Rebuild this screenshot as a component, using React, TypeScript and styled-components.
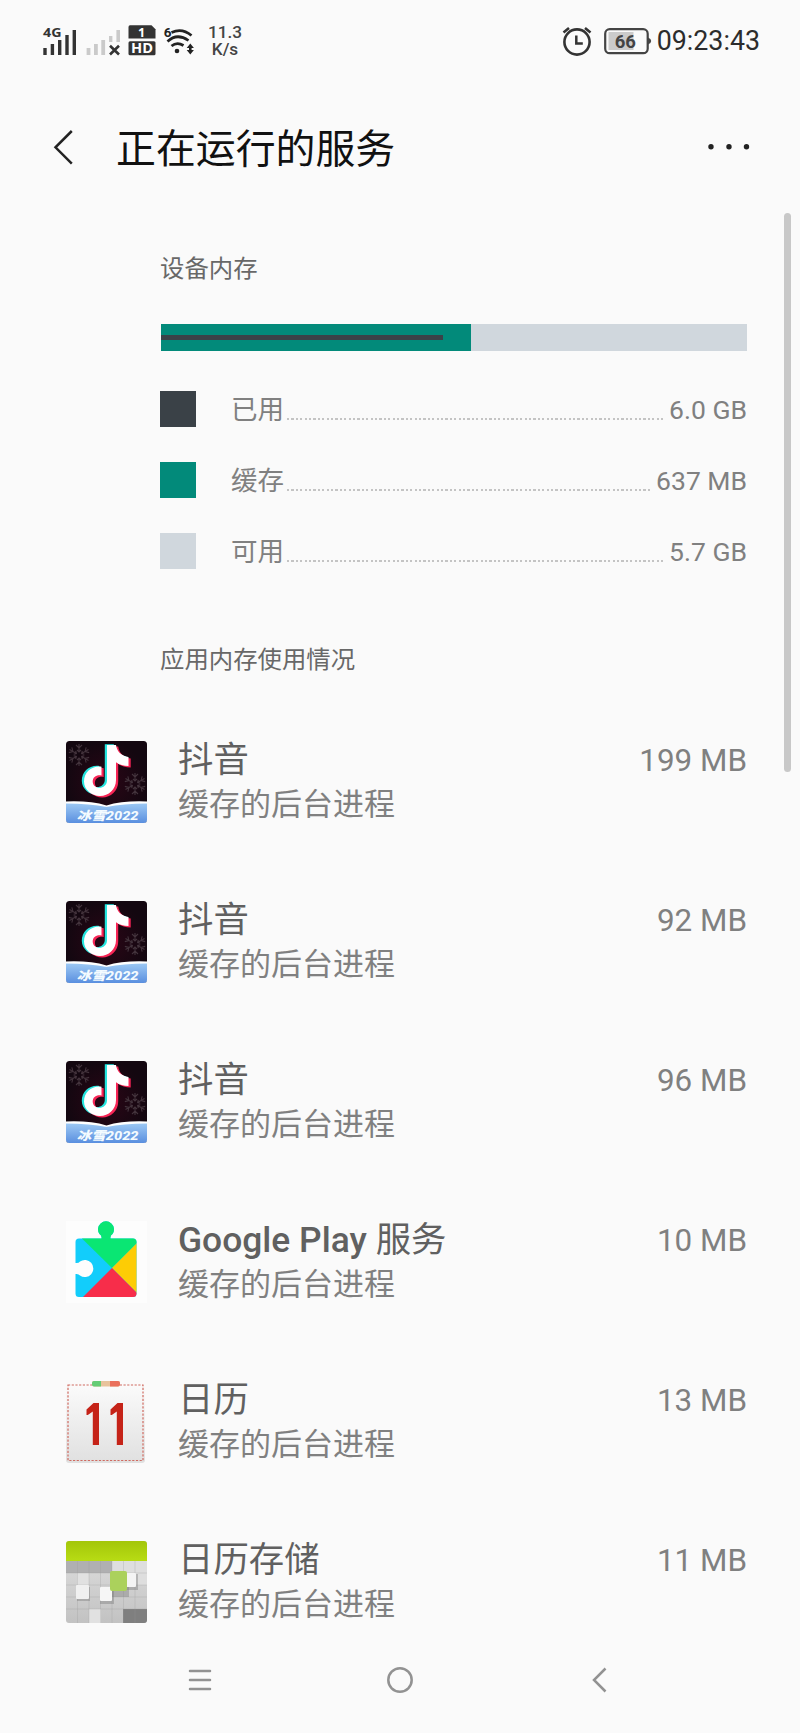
import React from 'react';
import styled, { createGlobalStyle } from 'styled-components';

const GlobalStyle = createGlobalStyle`
  * { box-sizing: border-box; }
  body {
    margin: 0;
    background: #fafafa;
    font-family: Roboto, 'Noto Sans CJK SC', sans-serif;
  }
  svg { display: block; flex: none; overflow: visible; }
`;

const Page = styled.div`
  position: relative;
  display: flex;
  flex-direction: column;
  width: 800px;
  height: 1733px;
  overflow: hidden;
  background: #fafafa;
`;

const StatusBar = styled.div`
  display: flex;
  align-items: center;
  justify-content: space-between;
  height: 82px;
  padding: 0 40px 0 43px;
`;

const StatusGroup = styled.div<{ $gap: number }>`
  display: flex;
  align-items: center;
  gap: ${(p) => p.$gap}px;
`;

const NetSpeed = styled.div`
  width: 36px;
  margin-left: 5px;
  color: #444;
  font-size: 17.2px;
  font-weight: 500;
  line-height: 17px;
  text-align: center;
`;

const Clock = styled.div`
  color: #2c2c2c;
  font-size: 26.8px;
  line-height: 32px;
`;

const Header = styled.header`
  display: flex;
  align-items: center;
  height: 134px;
  padding: 0 50px 0 52px;
`;

const Title = styled.h1`
  flex: 1;
  margin: 0 0 0 42px;
  padding-top: 2px;
  color: #111;
  font-size: 39.9px;
  font-weight: 400;
  line-height: 48px;
`;

const Memory = styled.section`
  display: flex;
  flex-direction: column;
  padding: 32px 53px 0 160px;
`;

const SectionLabel = styled.h2<{ $top?: number }>`
  margin: ${(p) => p.$top ?? 0}px 0 0;
  padding-top: 1px;
  color: #686868;
  font-size: 24.4px;
  font-weight: 400;
  line-height: 39px;
`;

const UsageBar = styled.div`
  display: flex;
  height: 27px;
  margin: 36px 0 40px 1px;
  background: #d0d7dd;
`;

const CachedPart = styled.div`
  display: flex;
  align-items: center;
  width: 310px;
  background: #028a7a;
`;

const UsedPart = styled.div`
  width: 282px;
  height: 5px;
  background: #3a4248;
`;

const Legend = styled.div`
  display: flex;
  flex-direction: column;
  gap: 35px;
`;

const LegendRow = styled.div`
  display: flex;
  align-items: center;
  height: 36px;
  color: #808080;
  font-size: 26.5px;
  line-height: 36px;
`;

const LegendText = styled.span`
  padding-top: 2px;
`;

const Swatch = styled.div<{ $color: string }>`
  width: 36px;
  height: 36px;
  margin-right: 35px;
  background: ${(p) => p.$color};
`;

const Leader = styled.div`
  flex: 1;
  height: 2px;
  margin: 19px 4px 0 3px;
  background: repeating-linear-gradient(90deg, #c4c4c4 0 2.2px, transparent 2.2px 4.4px);
`;

const AppList = styled.div`
  display: flex;
  flex-direction: column;
  margin-top: 23px;
`;

const AppRow = styled.div`
  display: flex;
  align-items: center;
  height: 160px;
  padding: 0 53px 0 66px;
`;

const AppText = styled.div`
  flex: 1;
  margin-left: 31px;
  padding-bottom: 2px;
`;

const AppName = styled.div`
  color: #606060;
  font-size: 35.4px;
  font-weight: 500;
  line-height: 47px;

  span { font-weight: 400; }
`;

const AppState = styled.div`
  color: #808080;
  font-size: 31px;
  line-height: 42px;
`;

const AppSize = styled.div`
  align-self: flex-start;
  margin-top: 37px;
  color: #808080;
  font-size: 31.4px;
  line-height: 44px;
`;

const NavBar = styled.nav`
  display: flex;
  align-items: center;
  justify-content: space-between;
  height: 35px;
  padding: 0 184px;
`;

const ScrollThumb = styled.div`
  position: absolute;
  top: 213px;
  right: 9px;
  width: 7px;
  height: 559px;
  border-radius: 4px;
  background: #c8c8c8;
`;

const Signal = () => (
  <svg width="34" height="32" viewBox="43 24 34 32" fill="#333">
    <text x="43" y="36" fontFamily="Open Sans" fontWeight="700" fontSize="12.5" textLength="18.5" lengthAdjust="spacingAndGlyphs">4G</text>
    <path d="M43.3 47h3.4v7h-3.4zM50.7 43h3.4v11h-3.4zM58 39h3.4v15H58zM65.3 34h3.4v20h-3.4zM72.6 29H76v25h-3.4z" />
  </svg>
);

const NoSignal = () => (
  <svg width="37" height="32" viewBox="84 24 37 32">
    <path fill="#cacaca" d="M86.6 47h3.8v7h-3.8zM94 43h3.8v11H94zM101.3 39h3.8v15h-3.8zM109 35h3.4v6H109zM116.4 29h3.6v12h-3.6z" />
    <path d="M110 44.700l9 8.800M119 44.700l-9 8.800" stroke="#333" strokeWidth="2.600" />
  </svg>
);

const HdBadge = () => (
  <svg width="28" height="32" viewBox="128 24 28 32">
    <path fill="#333" d="M130 24.3h21.500l4 4V37.600h-27V26q0-1.700 1.500-1.700z" />
    <rect x="128.500" y="40.200" width="27" height="14" rx="1.500" fill="#333" />
    <g fill="#fff" fontFamily="Open Sans" fontWeight="700" textAnchor="middle">
      <text x="141.500" y="35.500" fontSize="12.500">1</text>
      <text x="142" y="52.300" fontSize="14" textLength="22" lengthAdjust="spacingAndGlyphs">HD</text>
    </g>
  </svg>
);

const Wifi = () => (
  <svg width="32" height="32" viewBox="163 24 32 32">
    <text x="163.700" y="35.500" fill="#222" fontFamily="Roboto" fontWeight="700" fontSize="13.500">6</text>
    <g fill="none" stroke="#222" strokeWidth="2.700">
      <path d="M171.500 31.500Q182 26.500 191.500 34.500" />
      <path d="M167.500 40.500Q177 31.500 188.500 39.500" />
      <path d="M171.500 45Q177 40.300 183.500 44.500" />
    </g>
    <circle cx="177" cy="50" r="2.300" fill="#222" />
    <path fill="#222" d="M190.300 42.500l3.600 4.500h-2.300v2h2.300l-3.600 4.500-3.600-4.500h2.300v-2h-2.300z" />
  </svg>
);

const Alarm = () => (
  <svg width="30" height="32" viewBox="562 24 30 32" fill="none" stroke="#333">
    <circle cx="577" cy="41" r="12.600" strokeWidth="2.600" />
    <path d="M576.300 34.500v8h6.500" strokeWidth="2.500" />
    <path d="M563.500 31.500l5.500-4.500M590.500 31.500L585 27" strokeWidth="2.600" />
  </svg>
);

const Battery = () => (
  <svg width="48" height="32" viewBox="604 24 48 32">
    <rect x="608.500" y="31" width="25" height="18" fill="#cbcbcb" />
    <rect x="605.200" y="28.200" width="42.500" height="24" rx="4.500" fill="none" stroke="#444" strokeWidth="2.200" />
    <path d="M648 36.500q3.200 1.200 3.200 3.500t-3.200 3.500z" fill="#444" />
    <text x="625.300" y="47" fill="#444" fontFamily="Roboto" fontWeight="700" fontSize="18.500" textAnchor="middle">66</text>
  </svg>
);

const BackIcon = () => (
  <svg width="22" height="38" viewBox="0 0 22 38" fill="none" stroke="#222" strokeWidth="2.500">
    <path d="M19.800 1L3.500 17.300 19.800 33.600" />
  </svg>
);

const MoreIcon = () => (
  <svg width="42" height="10" viewBox="0 0 42 10" fill="#222">
    <circle cx="3" cy="2.800" r="2.700" />
    <circle cx="21" cy="2.800" r="2.700" />
    <circle cx="38.500" cy="2.800" r="2.700" />
  </svg>
);

const Flake = ({ x, y }: { x: number; y: number }) => (
  <g transform={`translate(${x} ${y})`} stroke="#43333c" strokeWidth="1.100" fill="none">
    {[0, 60, 120, 180, 240, 300].map((a) => (
      <path key={a} transform={`rotate(${a})`} d="M0-3V-11M-3-10L0-7 3-10M-2-5L0-3 2-5" />
    ))}
  </g>
);

const NOTE = 'M41 4h9c.8 6 5 11 12.500 12v9c-5 0-9-1.300-12.500-3.800v17.800c0 9.500-7.500 16-16 16S18 48.500 18 40.500c0-9 7.500-16 17.500-14.800v8.800c-5-1-8.800 1.700-8.800 6 0 3.800 3 6.300 6.800 6.300s7.500-2.600 7.500-7.500z';

const DouyinIcon = () => (
  <svg width="81" height="82" viewBox="0 0 81 82">
    <defs>
      <linearGradient id="snow" x2="0" y2="1">
        <stop offset="0" stopColor="#9cc8f4" />
        <stop offset="1" stopColor="#5a8fdf" />
      </linearGradient>
      <radialGradient id="night">
        <stop offset="0" stopColor="#2b0616" />
        <stop offset="1" stopColor="#130710" />
      </radialGradient>
      <clipPath id="tile"><rect width="81" height="82" rx="3.500" /></clipPath>
    </defs>
    <g clipPath="url(#tile)">
      <rect width="81" height="82" fill="url(#night)" />
      <Flake x={13} y={14} />
      <Flake x={69} y={43} />
      <path transform="translate(-2.200 -.8)" d={NOTE} fill="#25e5df" />
      <path transform="translate(2.200 1.500)" d={NOTE} fill="#f72556" />
      <path d={NOTE} fill="#fff" />
      <path d="M0 60.500Q24 59.500 40.500 64.500 57 59.500 81 60.500V82H0z" fill="#fff" />
      <path d="M0 62.500Q24 62.500 40.500 66 57 62.500 81 62.500V82H0z" fill="url(#snow)" />
      <text x="41.500" y="79" fill="#f4fbff" fontFamily="Roboto, 'Noto Sans CJK SC'" fontWeight="800" fontStyle="italic" fontSize="12" textAnchor="middle" textLength="62" lengthAdjust="spacingAndGlyphs">冰雪2022</text>
    </g>
  </svg>
);

const PlayServicesIcon = () => (
  <svg width="81" height="82" viewBox="0 0 81 82">
    <defs>
      <clipPath id="puzzle">
        <path d="M13 17.500H35.500q.5-3-2-4.500a8 8 0 1 1 13 0q-2.500 1.500-2 4.500h22.500q3.500 0 3.500 3.500v51.500q0 3.500-3.500 3.500H13Q9.500 76 9.500 72.500V53q3-.5 4.500 1.500a8.500 8.500 0 1 0 0-14Q12.500 42.500 9.500 42V21q0-3.500 3.500-3.500z" />
      </clipPath>
    </defs>
    <rect width="81" height="82" fill="#fdfdfd" />
    <g clipPath="url(#puzzle)">
      <rect width="81" height="82" fill="#12cdfb" />
      <path d="M16 17.500L46 47 74 19V0H16z" fill="#0ae673" />
      <path d="M46 47l28-28v56z" fill="#fdcc05" />
      <path d="M46 47L16 77h60z" fill="#f72d4a" />
    </g>
  </svg>
);

const CalendarIcon = () => (
  <svg width="81" height="82" viewBox="0 0 81 82">
    <defs>
      <linearGradient id="paper" x2="0" y2="1">
        <stop offset="0" stopColor="#fbfbfb" />
        <stop offset="1" stopColor="#e0e0e0" />
      </linearGradient>
    </defs>
    <rect x="0" y="3" width="79" height="79" rx="3" fill="url(#paper)" />
    <rect x="2" y="4" width="75" height="75.500" fill="none" stroke="#cf6a60" strokeWidth="1.200" strokeDasharray="2.200 1.500" />
    <rect x="26" y="0" width="28" height="5.500" rx="2" fill="#e8c39c" />
    <path d="M28 0h7v5.500h-7a2 2 0 0 1-2-2V2a2 2 0 0 1 2-2z" fill="#64cc75" />
    <path d="M44 0h8a2 2 0 0 1 2 2v1.500a2 2 0 0 1-2 2h-8z" fill="#ea705c" />
    <path d="M27.500 22H33v42h-6.200V30.500l-5 3.500h-1.300V28.500zM51.500 22H57v42h-6.200V30.500l-5 3.500h-1.300V28.500z" fill="#c52318" />
  </svg>
);

const StorageIcon = () => (
  <svg width="81" height="82" viewBox="0 0 81 82">
    <defs>
      <linearGradient id="lime" x2="0" y2="1">
        <stop offset="0" stopColor="#a3c60a" />
        <stop offset="1" stopColor="#b8dc14" />
      </linearGradient>
      <linearGradient id="stone" x2="0" y2="1">
        <stop offset="0" stopColor="#e2e2e2" />
        <stop offset="1" stopColor="#c2c2c2" />
      </linearGradient>
      <clipPath id="card"><rect width="81" height="82" rx="3" /></clipPath>
    </defs>
    <g clipPath="url(#card)">
      <rect width="81" height="82" fill="url(#stone)" />
      <path d="M0 20h46v12H0z" fill="#b0b0b1" />
      <path d="M11 32h12v12H11zM23 68h12v14H23z" fill="#e1e1e1" />
      <path d="M46 20h35v24H46z" fill="#dedede" />
      <path d="M57 68h24v14H57z" fill="#7f7f7f" />
      <path d="M11.500 20v62M23 20v62M34.500 20v62M46 20v62M57.500 20v62M69 20v62M0 32h81M0 44h81M0 56h81M0 68h81" stroke="#999" strokeOpacity=".28" fill="none" />
      <rect width="81" height="20" fill="url(#lime)" />
      <g fill="#777" fillOpacity=".4">
        <rect x="11" y="46" width="13" height="14" />
        <rect x="34" y="47" width="14" height="16" />
        <rect x="46" y="34" width="17" height="22" />
        <rect x="60" y="33" width="12" height="16" />
      </g>
      <rect x="10" y="44" width="13" height="14" rx="1" fill="#f0f0f0" />
      <rect x="34" y="46" width="12" height="14" rx="1" fill="#f6f6f6" />
      <rect x="60" y="32" width="10" height="14" rx="1" fill="#f4f4f4" />
      <rect x="44" y="30" width="17" height="20" rx="2" fill="#abd15c" />
    </g>
  </svg>
);

const MenuIcon = () => (
  <svg width="32" height="32" viewBox="0 0 32 32" stroke="#929292" strokeWidth="2.500" strokeLinecap="round">
    <path d="M6 7h20M6 16h20M6 25h20" />
  </svg>
);

const HomeIcon = () => (
  <svg width="32" height="32" viewBox="0 0 32 32" fill="none" stroke="#929292" strokeWidth="2.500">
    <circle cx="16" cy="16" r="11.700" />
  </svg>
);

const NavBackIcon = () => (
  <svg width="32" height="32" viewBox="0 0 32 32" fill="none" stroke="#929292" strokeWidth="2.500">
    <path d="M21.500 4.500L10 16l11.500 11.500" />
  </svg>
);

const usage = [
  { label: '已用', value: '6.0 GB', color: '#3a4147' },
  { label: '缓存', value: '637 MB', color: '#028a7a' },
  { label: '可用', value: '5.7 GB', color: '#d0d7dd' },
];

const apps: { name: React.ReactNode; size: string; Icon: React.FC }[] = [
  { name: <span>抖音</span>, size: '199 MB', Icon: DouyinIcon },
  { name: <span>抖音</span>, size: '92 MB', Icon: DouyinIcon },
  { name: <span>抖音</span>, size: '96 MB', Icon: DouyinIcon },
  { name: <>Google Play <span>服务</span></>, size: '10 MB', Icon: PlayServicesIcon },
  { name: <span>日历</span>, size: '13 MB', Icon: CalendarIcon },
  { name: <span>日历存储</span>, size: '11 MB', Icon: StorageIcon },
];

export default function App() {
  return (
    <Page>
      <GlobalStyle />
      <StatusBar>
        <StatusGroup $gap={7}>
          <Signal />
          <NoSignal />
          <HdBadge />
          <Wifi />
          <NetSpeed>11.3<br />K/s</NetSpeed>
        </StatusGroup>
        <StatusGroup $gap={12}>
          <Alarm />
          <StatusGroup $gap={5}>
            <Battery />
            <Clock>09:23:43</Clock>
          </StatusGroup>
        </StatusGroup>
      </StatusBar>
      <Header>
        <BackIcon />
        <Title>正在运行的服务</Title>
        <MoreIcon />
      </Header>
      <Memory>
        <SectionLabel>设备内存</SectionLabel>
        <UsageBar>
          <CachedPart><UsedPart /></CachedPart>
        </UsageBar>
        <Legend>
          {usage.map((u) => (
            <LegendRow key={u.label}>
              <Swatch $color={u.color} />
              <LegendText>{u.label}</LegendText>
              <Leader />
              <LegendText>{u.value}</LegendText>
            </LegendRow>
          ))}
        </Legend>
        <SectionLabel $top={70}>应用内存使用情况</SectionLabel>
      </Memory>
      <AppList>
        {apps.map(({ name, size, Icon }, i) => (
          <AppRow key={i}>
            <Icon />
            <AppText>
              <AppName>{name}</AppName>
              <AppState>缓存的后台进程</AppState>
            </AppText>
            <AppSize>{size}</AppSize>
          </AppRow>
        ))}
      </AppList>
      <NavBar>
        <MenuIcon />
        <HomeIcon />
        <NavBackIcon />
      </NavBar>
      <ScrollThumb />
    </Page>
  );
}
